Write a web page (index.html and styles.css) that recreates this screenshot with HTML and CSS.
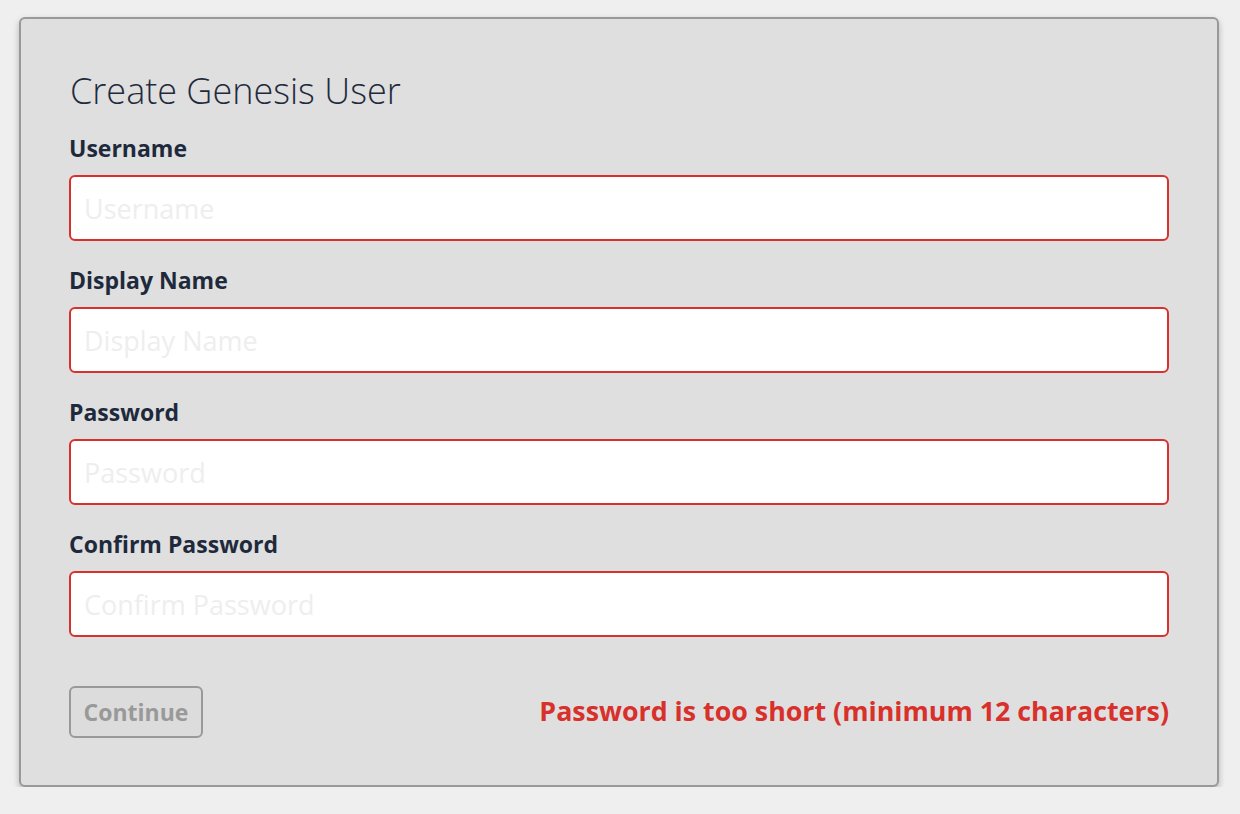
FILE: index.html
```html
<!DOCTYPE html>
<html>
<head>
<meta charset="utf-8">
<link rel="stylesheet" href="styles.css">
</head>
<body>
<div class="card">
  <h1 class="title">Create Genesis User</h1>
  <form class="form">
    <div class="field">
      <label class="label">Username</label>
      <input class="input" type="text" placeholder="Username">
    </div>
    <div class="field">
      <label class="label">Display Name</label>
      <input class="input" type="text" placeholder="Display Name">
    </div>
    <div class="field">
      <label class="label">Password</label>
      <input class="input" type="password" placeholder="Password">
    </div>
    <div class="field">
      <label class="label">Confirm Password</label>
      <input class="input" type="password" placeholder="Confirm Password">
    </div>
    <div class="actions">
      <button class="btn" type="button" disabled>Continue</button>
      <span class="error">Password is too short (minimum 12 characters)</span>
    </div>
  </form>
</div>
</body>
</html>
```

FILE: styles.css
```css
html, body {
  margin: 0;
  padding: 0;
}
body {
  background: #efefef;
  font-family: "Open Sans", "Noto Sans", sans-serif;
  color: #1e2a3c;
  padding: 17px 21px 0 19px;
}
.card {
  background: #dfdfdf;
  border: 2px solid #999999;
  border-radius: 6px;
  box-shadow: 0 3px 6px rgba(0, 0, 0, 0.25);
  padding: 50px 48px 47px 48px;
}
.title {
  margin: 0 0 0 1px;
  font-size: 36px;
  font-weight: 300;
  line-height: 44px;
  color: #1f2b3d;
}
.form {
  display: flex;
  flex-direction: column;
  margin-top: 21px;
}
.field {
  display: flex;
  flex-direction: column;
  margin-bottom: 25px;
}
.label {
  font-size: 23px;
  font-weight: 700;
  line-height: 28px;
  margin-bottom: 13px;
  color: #1e2a3c;
}
.input {
  box-sizing: border-box;
  height: 66px;
  width: 100%;
  border: 2px solid #d8302b;
  border-radius: 6px;
  background: #ffffff;
  padding: 0 13px;
  font-family: "Open Sans", "Noto Sans", sans-serif;
  font-size: 27px;
  color: #1e2a3c;
  outline: none;
}
.input::placeholder {
  color: #eeeeee;
  font-weight: 400;
}
.actions {
  display: flex;
  align-items: center;
  justify-content: space-between;
  margin-top: 24px;
}
.btn {
  box-sizing: border-box;
  height: 52px;
  width: 134px;
  border: 2px solid #999999;
  border-radius: 6px;
  background: #dcdcdc;
  color: #999999;
  font-family: "Open Sans", "Noto Sans", sans-serif;
  font-size: 23px;
  font-weight: 700;
  padding: 0;
}
.error {
  color: #d8302b;
  font-size: 26.8px;
  font-weight: 700;
  margin-bottom: 4px;
}
```
